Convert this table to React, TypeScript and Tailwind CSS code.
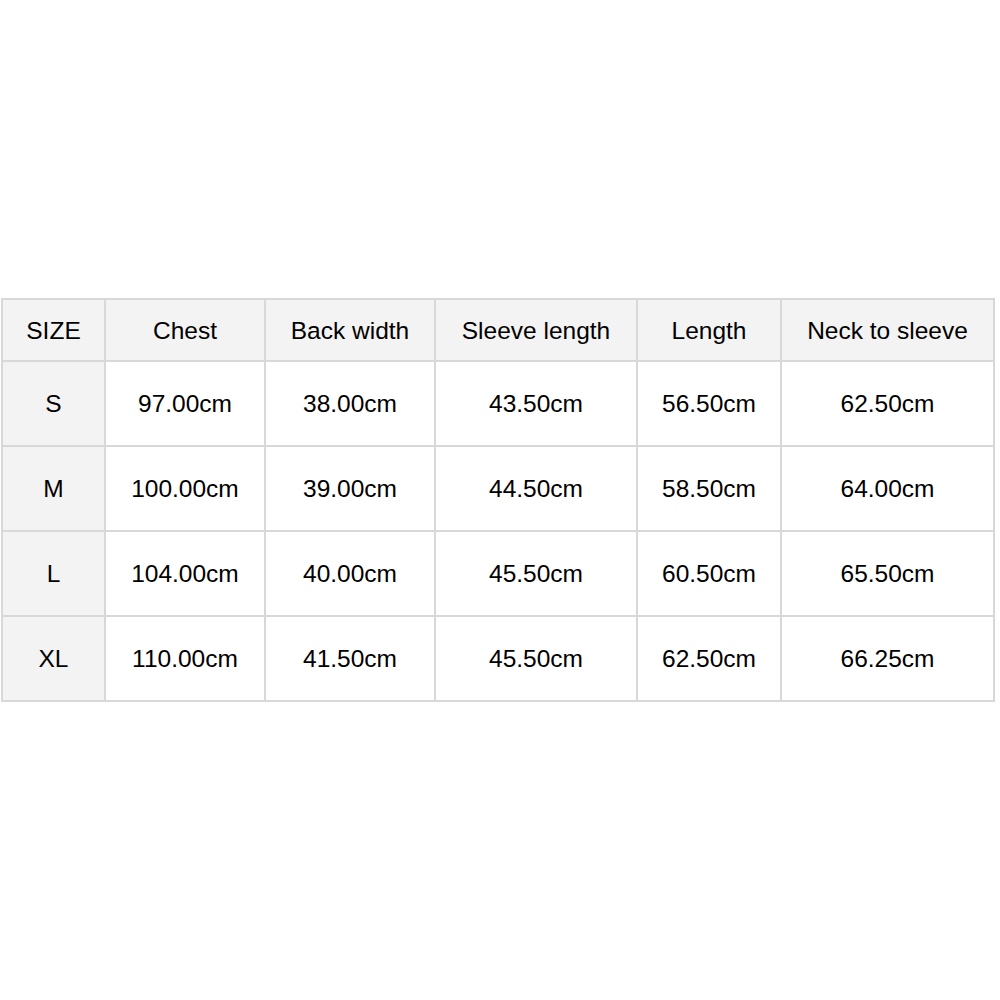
import React from "react";

const headers = ["SIZE", "Chest", "Back width", "Sleeve length", "Length", "Neck to sleeve"];
const rows = [
  ["S", "97.00cm", "38.00cm", "43.50cm", "56.50cm", "62.50cm"],
  ["M", "100.00cm", "39.00cm", "44.50cm", "58.50cm", "64.00cm"],
  ["L", "104.00cm", "40.00cm", "45.50cm", "60.50cm", "65.50cm"],
  ["XL", "110.00cm", "41.50cm", "45.50cm", "62.50cm", "66.25cm"],
];

export default function App() {
  return (
    <div className="w-[1000px] h-[1000px] bg-white pt-[298px] pl-[1px]" style={{ fontFamily: '"Liberation Sans", Arial, sans-serif' }}>
      <div className="grid w-[994px] grid-cols-[101px_158px_168px_200px_142px_211px] grid-rows-[60px_83px_83px_83px_83px] gap-[2px] border-2 border-[#d8d8d8] bg-[#d8d8d8] text-[24.5px] text-black">
        {headers.map((h) => (
          <div key={h} className="flex items-center justify-center bg-[#f3f3f3] pt-[2px]">
            {h}
          </div>
        ))}
        {rows.map((r) =>
          r.map((c, i) => (
            <div
              key={r[0] + i}
              className={i === 0 ? "flex items-center justify-center bg-[#f3f3f3] pt-[2px]" : "flex items-center justify-center bg-white pt-[2px]"}
            >
              {c}
            </div>
          ))
        )}
      </div>
    </div>
  );
}
